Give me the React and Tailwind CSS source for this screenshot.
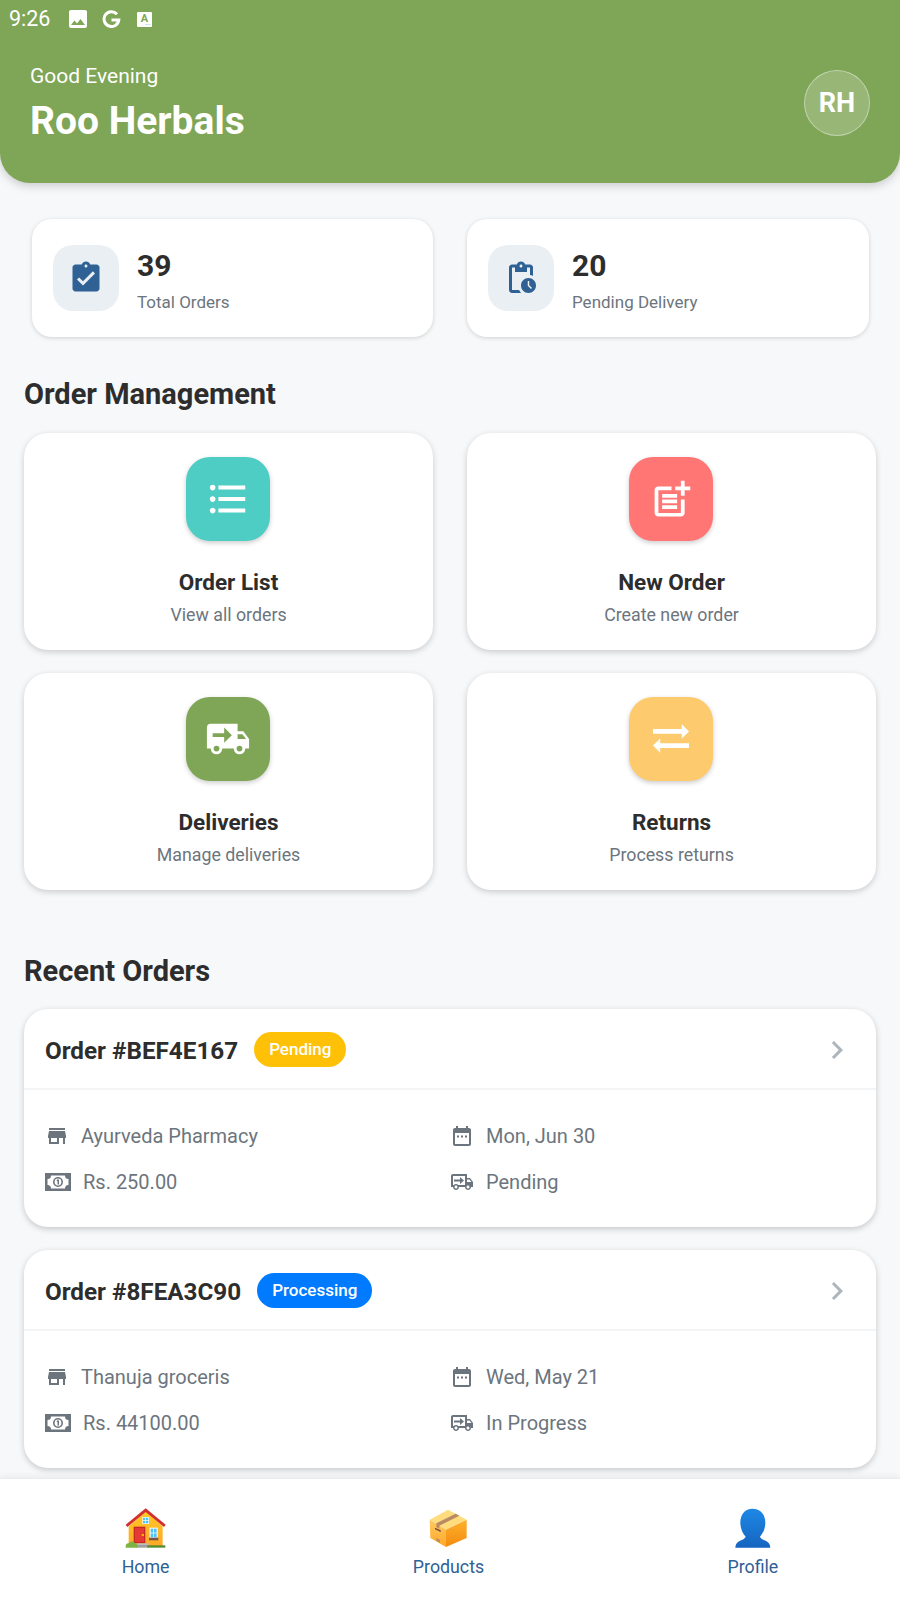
import React from 'react';

const Icon = ({ d, size = 24, className = '' }) => (
  <svg width={size} height={size} viewBox="0 0 24 24" fill="currentColor" className={`shrink-0 ${className}`}>
    <path d={d} />
  </svg>
);

const paths = {
  turnedIn: 'M19 3h-4.18C14.4 1.84 13.3 1 12 1c-1.3 0-2.4.84-2.82 2H5c-1.1 0-2 .9-2 2v14c0 1.1.9 2 2 2h14c1.1 0 2-.9 2-2V5c0-1.1-.9-2-2-2zm-7 0c.55 0 1 .45 1 1s-.45 1-1 1-1-.45-1-1 .45-1 1-1zm-2 14l-4-4 1.41-1.41L10 14.17l6.59-6.59L18 9l-8 8z',
  pending: 'M17 12c-2.76 0-5 2.24-5 5s2.24 5 5 5 5-2.24 5-5-2.24-5-5-5zm1.65 7.35L16.5 17.2V14h1v2.79l1.85 1.85-.7.71zM18 3h-3.18C14.4 1.84 13.3 1 12 1s-2.4.84-2.82 2H6c-1.1 0-2 .9-2 2v15c0 1.1.9 2 2 2h6.11c-.59-.57-1.07-1.25-1.42-2H6V5h2v3h8V5h2v5.08c.71.1 1.38.31 2 .6V5c0-1.1-.9-2-2-2zm-6 2c-.55 0-1-.45-1-1s.45-1 1-1 1 .45 1 1-.45 1-1 1z',
  list: 'M4 10.5c-.83 0-1.5.67-1.5 1.5s.67 1.5 1.5 1.5 1.5-.67 1.5-1.5-.67-1.5-1.5-1.5zm0-6c-.83 0-1.5.67-1.5 1.5S3.17 7.5 4 7.5 5.5 6.83 5.5 6 4.83 4.5 4 4.5zm0 12c-.83 0-1.5.68-1.5 1.5s.68 1.5 1.5 1.5 1.5-.68 1.5-1.5-.67-1.5-1.5-1.5zM7 19h14v-2H7v2zm0-6h14v-2H7v2zm0-8v2h14V5H7z',
  postAdd: 'M17 19.22H5V7h7V5H5c-1.1 0-2 .9-2 2v12c0 1.1.9 2 2 2h12c1.1 0 2-.9 2-2v-7h-2v7.22zM19 2h-2v3h-3c.01.01 0 2 0 2h3v2.99c.01.01 2 0 2 0V7h3V5h-3V2zM7 9h8v2H7zM7 12v2h8v-2h-3zM7 15h8v2H7z',
  truck: 'M3,4A2,2 0 0,0 1,6V17H3A3,3 0 0,0 6,20A3,3 0 0,0 9,17H15A3,3 0 0,0 18,20A3,3 0 0,0 21,17H23V12L20,8H17V4M10,6L14,10L10,14V11H4V9H10M17,9.5H19.5L21.47,12H17M6,15.5A1.5,1.5 0 0,1 7.5,17A1.5,1.5 0 0,1 6,18.5A1.5,1.5 0 0,1 4.5,17A1.5,1.5 0 0,1 6,15.5M18,15.5A1.5,1.5 0 0,1 19.5,17A1.5,1.5 0 0,1 18,18.5A1.5,1.5 0 0,1 16.5,17A1.5,1.5 0 0,1 18,15.5Z',
  swap: 'M3 7h14.4V4.6L21 8.2l-3.6 3.6V9.4H3zM21 14.1H6.6v-2.4L3 15.3l3.6 3.6v-2.4H21z',
  store: 'M20 4H4v2h16V4zm1 10v-2l-1-5H4l-1 5v2h1v6h10v-6h4v6h2v-6h1zm-9 4H6v-4h6v4z',
  calendar: 'M19 4h-1V2h-2v2H8V2H6v2H5c-1.1 0-2 .9-2 2v14c0 1.1.9 2 2 2h14c1.1 0 2-.9 2-2V6c0-1.1-.9-2-2-2zm0 16H5V9h14v11zM7 11.5h2v2H7zM11 11.5h2v2h-2zM15 11.5h2v2h-2z',
  truckOutline: 'M18 18.5c.83 0 1.5-.67 1.5-1.5s-.67-1.5-1.5-1.5-1.5.67-1.5 1.5.67 1.5 1.5 1.5zM19.5 9.5H17V12h4.46L19.5 9.5zM6 18.5c.83 0 1.5-.67 1.5-1.5s-.67-1.5-1.5-1.5-1.5.67-1.5 1.5.67 1.5 1.5 1.5zM20 8l3 4v5h-2c0 1.66-1.34 3-3 3s-3-1.34-3-3H9c0 1.66-1.34 3-3 3s-3-1.34-3-3H1V6c0-1.11.89-2 2-2h14v4h3zM3 6v9h.76c.55-.61 1.35-1 2.24-1s1.69.39 2.24 1H15V6H3zM10 7l4 3.5-4 3.5v-2.5H4v-2h6z',
  chevron: 'M8.59 16.59L13.17 12 8.59 7.41 10 6l6 6-6 6z',
  image: 'M21 19V5c0-1.1-.9-2-2-2H5c-1.1 0-2 .9-2 2v14c0 1.1.9 2 2 2h14c1.1 0 2-.9 2-2zM8.5 13.5l2.5 3.01L14.5 12l4.5 6H5l3.5-4.5z',
};

const quickActions = [
  { title: 'Order List', sub: 'View all orders', bg: 'bg-[#4ECDC4]', icon: paths.list, size: 46 },
  { title: 'New Order', sub: 'Create new order', bg: 'bg-[#FF7675]', icon: paths.postAdd, size: 45 },
  { title: 'Deliveries', sub: 'Manage deliveries', bg: 'bg-[#7FA556]', icon: paths.truck, size: 46 },
  { title: 'Returns', sub: 'Process returns', bg: 'bg-[#FDCB6E]', icon: paths.swap, size: 48 },
];

const orders = [
  { id: 'BEF4E167', status: 'Pending', color: 'bg-[#FFC107]', shop: 'Ayurveda Pharmacy', date: 'Mon, Jun 30', amount: 'Rs. 250.00', delivery: 'Pending' },
  { id: '8FEA3C90', status: 'Processing', color: 'bg-[#007BFF]', shop: 'Thanuja groceris', date: 'Wed, May 21', amount: 'Rs. 44100.00', delivery: 'In Progress' },
];

const CashIcon = () => (
  <svg width="26" height="18" viewBox="0 0 26 18" className="shrink-0">
    <path
      fill="currentColor"
      fillRule="evenodd"
      d="M0 0h26v18H0zM6 2.5a3.5 3.5 0 0 1-3.5 3.5v6A3.5 3.5 0 0 1 6 15.5h14a3.5 3.5 0 0 1 3.5-3.5V6A3.5 3.5 0 0 1 20 2.5zM13 4a5 5 0 1 1 0 10 5 5 0 0 1 0-10zM13 5.6a3.4 3.4 0 1 0 0 6.8 3.4 3.4 0 0 0 0-6.8zM12 6.6h2v4.8h-1.5V8h-.9z"
    />
  </svg>
);

const HouseIcon = () => (
  <svg width="43.33" height="41.67" viewBox="75 50 130 125">
    <defs>
      <linearGradient id="houseWall" x1="0" y1="0" x2="0" y2="1">
        <stop offset="0" stopColor="#FFCA28" />
        <stop offset="1" stopColor="#FFA726" />
      </linearGradient>
    </defs>
    <path d="M89 108L140 62l51 46v62H89z" fill="url(#houseWall)" />
    <path d="M140 54L80 103l5 7 55-45 55 45 5-7z" fill="#D32F2F" />
    <rect x="130" y="80" width="20" height="21" fill="#FFFFFF" />
    <rect x="132" y="82" width="7" height="7.5" fill="#4FC3F7" />
    <rect x="141" y="82" width="7" height="7.5" fill="#4FC3F7" />
    <rect x="132" y="91.5" width="7" height="7.5" fill="#4FC3F7" />
    <rect x="141" y="91.5" width="7" height="7.5" fill="#4FC3F7" />
    <rect x="104" y="109" width="35" height="50" fill="#C62828" />
    <rect x="108" y="113" width="27" height="42" fill="#E53935" />
    <rect x="128" y="131" width="7" height="6" fill="#FFB300" />
    <rect x="152" y="112" width="24" height="31" fill="#FFFFFF" />
    <rect x="155" y="115" width="8" height="12" fill="#4FC3F7" />
    <rect x="165" y="115" width="8" height="12" fill="#4FC3F7" />
    <rect x="155" y="129" width="8" height="12" fill="#4FC3F7" />
    <rect x="165" y="129" width="8" height="12" fill="#4FC3F7" />
    <rect x="150" y="142" width="28" height="8" fill="#795548" />
    <rect x="113" y="159" width="36" height="5" fill="#BDBDBD" />
    <rect x="113" y="164" width="36" height="8" fill="#9E9E9E" />
    <rect x="145" y="165" width="54" height="7" fill="#558B2F" />
    <path d="M80 172c-1-9 3-14 9-13 2-6 14-8 18-1 6 0 9 5 9 14z" fill="#7CB342" />
  </svg>
);

const BoxIcon = () => (
  <svg width="43.33" height="41.67" viewBox="55 50 130 125">
    <defs>
      <linearGradient id="boxLeft" x1="0" y1="0" x2="0" y2="1">
        <stop offset="0" stopColor="#FFCA62" />
        <stop offset="1" stopColor="#FFA726" />
      </linearGradient>
      <linearGradient id="boxRight" x1="0" y1="0" x2="0" y2="1">
        <stop offset="0" stopColor="#FFB02E" />
        <stop offset="1" stopColor="#F28C0F" />
      </linearGradient>
    </defs>
    <path d="M118 58l56 30-62 30-49-30z" fill="#FFDD7F" />
    <path d="M63 88l49 30v52l-47-27z" fill="url(#boxLeft)" />
    <path d="M112 118l62-30v55l-62 27z" fill="url(#boxRight)" />
    <path d="M141 70l11 6-60 30v9l-9-5v-11z" fill="#B98A63" />
    <path d="M79 112l17 8v5l-17-8z" fill="#6D4C41" />
    <path d="M83 143l11 6v8l-11-6z" fill="#B98A63" />
  </svg>
);

const PersonIcon = () => (
  <svg width="43.33" height="41.67" viewBox="965 50 130 125">
    <defs>
      <linearGradient id="personFill" x1="0" y1="0" x2="0" y2="1">
        <stop offset="0" stopColor="#1E88E5" />
        <stop offset="1" stopColor="#1565C0" />
      </linearGradient>
    </defs>
    <path
      d="M1030 55c24 0 38 18 38 42 0 18-7 32-16 42 2 6 10 9 17 12 9 4 14 11 14 21H978c0-10 5-17 14-21 7-3 15-6 17-12-9-10-16-24-16-42 0-24 13-42 37-42z"
      fill="url(#personFill)"
    />
  </svg>
);

function StatCard({ icon, value, label }) {
  return (
    <div className="h-[118px] bg-white rounded-[20px] flex items-center px-[21px] gap-[18px] shadow-[0_1px_4px_rgba(0,0,0,0.16)]">
      <div className="w-[66px] h-[66px] rounded-[20px] bg-[#EAEFF4] flex items-center justify-center text-[#2F6194]">
        <Icon d={icon} size={36} />
      </div>
      <div className="flex flex-col pt-[3px]">
        <span className="text-[30px] leading-[36px] font-bold text-[#2D2D2D]">{value}</span>
        <span className="text-[17px] leading-[20px] mt-[8px] text-[#6C757D]">{label}</span>
      </div>
    </div>
  );
}

function ActionCard({ title, sub, bg, icon, size }) {
  return (
    <div className="h-[217px] bg-white rounded-[24px] flex flex-col items-center pt-[24px] shadow-[0_2px_6px_rgba(0,0,0,0.18)]">
      <div className={`w-[84px] h-[84px] mr-[1px] rounded-[24px] ${bg} flex items-center justify-center text-white shadow-[0_2px_5px_rgba(0,0,0,0.2)]`}>
        <Icon d={icon} size={size} />
      </div>
      <div className="mt-[26px] text-[22.5px] leading-[30px] font-bold text-[#2D2D2D]">{title}</div>
      <div className="mt-[7px] text-[17.8px] leading-[22px] text-[#6C757D]">{sub}</div>
    </div>
  );
}

function OrderCard({ order }) {
  return (
    <div className="bg-white rounded-[24px] h-[218px] shadow-[0_2px_6px_rgba(0,0,0,0.2)]">
      <div className="h-[81px] border-b-2 border-[#F3F4F6] flex items-center pl-[21px] pr-[21px]">
        <span className="mt-[6px] text-[24.25px] font-bold text-[#2D2D2D]">Order #{order.id}</span>
        <span className={`ml-[16px] mt-[2px] h-[35px] px-[15px] rounded-full ${order.color} flex items-center text-white text-[17px] font-medium`}>{order.status}</span>
        <Icon d={paths.chevron} size={36} className="ml-auto mt-[2px] text-[#ADB5BD]" />
      </div>
      <div className="pl-[21px] pt-[34px] grid grid-cols-[405px_1fr] gap-y-[22px] text-[20px] leading-[24px] text-[#6C757D]">
        <div className="flex items-center gap-[12px]">
          <Icon d={paths.store} size={24} />
          <span>{order.shop}</span>
        </div>
        <div className="flex items-center gap-[12px]">
          <Icon d={paths.calendar} size={24} />
          <span>{order.date}</span>
        </div>
        <div className="flex items-center gap-[12px]">
          <CashIcon />
          <span>{order.amount}</span>
        </div>
        <div className="flex items-center gap-[12px]">
          <Icon d={paths.truckOutline} size={24} />
          <span>{order.delivery}</span>
        </div>
      </div>
    </div>
  );
}

function NavItem({ icon, label }) {
  return (
    <div className="flex flex-col items-center">
      {icon}
      <span className="text-[17.8px] leading-[22px] text-[#2F6194] mt-[7px]">{label}</span>
    </div>
  );
}

export default function App() {
  return (
    <div className="w-[900px] h-[1600px] overflow-hidden flex flex-col bg-[#F7F8FA] font-['Roboto',sans-serif]">
      <header className="h-[183px] shrink-0 bg-[#7FA556] rounded-b-[30px] shadow-[0_3px_10px_rgba(0,0,0,0.18)] text-white">
        <div className="h-[38px] pl-[9px] flex items-center">
          <span className="w-[41px] text-[21.5px] leading-none">9:26</span>
          <Icon d={paths.image} size={24} className="ml-[16px]" />
          <svg width="19" height="18" viewBox="0 0 19 18" className="ml-[12px]" fill="none" stroke="currentColor" strokeWidth="3">
            <path d="M15 4.2A7.4 7.4 0 1 0 16.8 10H9.5" />
          </svg>
          <span className="ml-[16px] relative w-[15px] h-[15px] bg-white rounded-[1px] text-[#7FA556] text-[11px] font-bold leading-none flex justify-center pt-[1px]">
            A
            <span className="absolute right-[1px] bottom-[1px] text-[5px] leading-none tracking-[0.5px]">...</span>
          </span>
        </div>
        <div className="flex items-center justify-between pl-[30px] pr-[30px] pt-[25px]">
          <div>
            <div className="text-[21px] leading-[26px]">Good Evening</div>
            <div className="text-[39px] leading-[50px] font-bold mt-[7px]">Roo Herbals</div>
          </div>
          <div className="w-[66px] h-[66px] mb-[3px] rounded-full bg-white/20 border border-white/40 flex items-center justify-center text-[27px] font-bold">RH</div>
        </div>
      </header>

      <section className="grid grid-cols-[401px_402px] gap-x-[34px] pl-[32px] mt-[36px]">
        <StatCard icon={paths.turnedIn} value="39" label="Total Orders" />
        <StatCard icon={paths.pending} value="20" label="Pending Delivery" />
      </section>

      <section className="px-[24px]">
        <h2 className="mt-[39px] text-[29px] leading-[36px] font-bold text-[#2D2D2D]">Order Management</h2>
        <div className="mt-[21px] grid grid-cols-2 gap-x-[34px] gap-y-[23px]">
          {quickActions.map(a => <ActionCard key={a.title} {...a} />)}
        </div>
        <h2 className="mt-[63px] text-[29px] leading-[36px] font-bold text-[#2D2D2D]">Recent Orders</h2>
        <div className="mt-[20px] flex flex-col gap-[23px]">
          {orders.map(o => <OrderCard key={o.id} order={o} />)}
        </div>
      </section>

      <nav className="mt-auto h-[122px] shrink-0 bg-white border-t border-[#E9ECEF] shadow-[0_-2px_6px_rgba(0,0,0,0.05)] flex justify-around pt-[28px]">
        <NavItem icon={<HouseIcon />} label="Home" />
        <NavItem icon={<BoxIcon />} label="Products" />
        <NavItem icon={<PersonIcon />} label="Profile" />
      </nav>
    </div>
  );
}
